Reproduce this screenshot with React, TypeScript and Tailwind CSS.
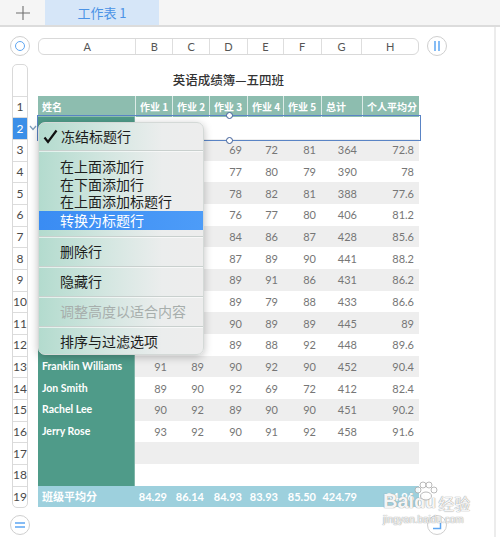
import React from "react";

const COLS = ["w-[97px]", "w-[37px]", "w-[37px]", "w-[38px]", "w-[36px]", "w-[38px]", "w-[41px]", "w-[57px]"];
const LETTERS = ["A", "B", "C", "D", "E", "F", "G", "H"];
const HEADERS = ["姓名", "作业 1", "作业 2", "作业 3", "作业 4", "作业 5", "总计", "个人平均分"];

// row number -> [name, b, c, d, e, f, total, avg]; rows 2-12 name/B/C sit under the menu
const DATA: Record<number, (string | number)[]> = {
  2: ["", "", "", "", "", "", "", ""],
  3: ["", "", "", 69, 72, 81, 364, 72.8],
  4: ["", "", "", 77, 80, 79, 390, 78],
  5: ["", "", "", 78, 82, 81, 388, 77.6],
  6: ["", "", "", 76, 77, 80, 406, 81.2],
  7: ["", "", "", 84, 86, 87, 428, 85.6],
  8: ["", "", "", 87, 89, 90, 441, 88.2],
  9: ["", "", "", 89, 91, 86, 431, 86.2],
  10: ["", "", "", 89, 79, 88, 433, 86.6],
  11: ["", "", "", 90, 89, 89, 445, 89],
  12: ["", "", "", 89, 88, 92, 448, 89.6],
  13: ["Franklin Williams", 91, 89, 90, 92, 90, 452, 90.4],
  14: ["Jon Smith", 89, 90, 92, 69, 72, 412, 82.4],
  15: ["Rachel Lee", 90, 92, 89, 90, 90, 451, 90.2],
  16: ["Jerry Rose", 93, 92, 90, 91, 92, 458, 91.6],
  17: ["", "", "", "", "", "", "", ""],
  18: ["", "", "", "", "", "", "", ""],
};
const FOOTER = ["班级平均分", "84.29", "86.14", "84.93", "83.93", "85.50", "424.79", "84.96"];

const CJK = "font-['Noto_Sans_CJK_SC',sans-serif]";
const NUM = "font-['Lato','Noto_Sans_CJK_SC',sans-serif]";

const MenuSep = () => <div className="h-[2px] border-t border-[#c9d0ce] border-b border-b-white/60" />;

export default function App() {
  const rowNums = Array.from({ length: 19 }, (_, i) => i + 1);

  return (
    <div className={`relative w-[500px] h-[537px] bg-white overflow-hidden ${NUM}`}>
      {/* sheet tabs */}
      <div className="flex h-[27px] bg-[#f5f5f5] border-b-2 border-[#dcdcdc]">
        <div className="w-[45px] flex items-center justify-center">
          <svg width="14" height="14" viewBox="0 0 14 14">
            <path d="M7 0v14M0 7h14" stroke="#6f6f6f" strokeWidth="1.1" />
          </svg>
        </div>
        <div className={`w-[114px] bg-[#d6e6f8] flex items-center justify-center text-[13px] leading-[16px] text-[#4b93e6] ${CJK}`}>
          工作表 1
        </div>
      </div>

      <div className="flex pl-[10px] pt-[9px]">
        {/* left gutter */}
        <div className="w-[20px] flex flex-col items-center">
          <div className="w-[20px] h-[20px] rounded-full border border-[#cfcfcf] flex items-center justify-center">
            <div className="w-[10px] h-[10px] rounded-full border-[1.5px] border-[#5ea6f2]" />
          </div>
          <div className="mt-[8px] w-[16px] border border-[#d9d9d9] rounded-[5px] overflow-hidden">
            <div className="h-[30.7px]" />
            {rowNums.map((n) => (
              <div
                key={n}
                className={`h-[21.67px] border-t border-[#dcdcdc] flex items-center justify-center text-[12px] leading-[14px] ${
                  n === 2 ? "bg-[#3b8fe8] text-white" : "text-[#4a4a4a]"
                }`}
              >
                {n}
              </div>
            ))}
          </div>
          <div className="mt-[7px] w-[20px] h-[20px] rounded-full border border-[#cfcfcf] flex items-center justify-center">
            <svg width="10" height="6" viewBox="0 0 10 6">
              <path d="M0 1h10M0 5h10" stroke="#5ea6f2" strokeWidth="1.5" />
            </svg>
          </div>
        </div>

        {/* table */}
        <div className="ml-[8px] w-[381px] flex flex-col">
          <div className="h-[20px] flex items-center">
            <div className="flex h-[17px] w-full border border-[#d9d9d9] rounded-[6px]">
              {LETTERS.map((l, i) => (
                <div
                  key={l}
                  className={`${COLS[i]} ${i > 0 ? "border-l border-[#dedede]" : ""} flex items-center justify-center text-[11px] leading-[13px] text-[#555]`}
                >
                  {l}
                </div>
              ))}
            </div>
          </div>

          <div className="mt-[8px]">
            <div className={`h-[31.7px] flex items-center justify-center text-[12.5px] leading-[16px] font-medium text-[#333] ${CJK}`}>
              英语成绩簿—五四班
            </div>

            <div className="flex h-[21.67px] bg-[#8dbdaf]">
              {HEADERS.map((h, i) => (
                <div
                  key={h}
                  className={`${COLS[i]} ${i > 0 ? "border-l border-white/70" : ""} flex items-center pl-[4px] text-[10px] leading-[13px] font-bold text-white whitespace-nowrap overflow-hidden ${CJK}`}
                >
                  {h}
                </div>
              ))}
            </div>

            {Object.keys(DATA).map((k) => {
              const r = Number(k);
              const row = DATA[r];
              return (
                <div key={r} className={`flex h-[21.67px] ${r % 2 === 1 ? "bg-[#eeeeee]" : "bg-white"}`}>
                  {row.map((v, i) =>
                    i === 0 ? (
                      <div
                        key={i}
                        className={`${COLS[0]} bg-[#4f9b89] border-r border-[#7fb5a8] flex items-center pl-[4px] text-[10.5px] leading-[13px] font-bold text-white whitespace-nowrap`}
                      >
                        {v}
                      </div>
                    ) : (
                      <div
                        key={i}
                        className={`${COLS[i]} flex items-center justify-end pr-[5px] text-[11px] leading-[13px] text-[#767676]`}
                      >
                        {v}
                      </div>
                    )
                  )}
                </div>
              );
            })}

            <div className="flex h-[21.67px] bg-[#9dd0dd]">
              {FOOTER.map((v, i) => (
                <div
                  key={i}
                  className={`${COLS[i]} flex items-center ${
                    i === 0 ? `pl-[4px] ${CJK}` : "justify-end pr-[5px]"
                  } text-[11px] leading-[13px] font-bold text-white whitespace-nowrap`}
                >
                  {v}
                </div>
              ))}
            </div>
          </div>
        </div>

        {/* right gutter */}
        <div className="ml-[8px] w-[20px] flex flex-col justify-between">
          <div className="w-[20px] h-[20px] rounded-full border border-[#cfcfcf] flex items-center justify-center">
            <svg width="6" height="10" viewBox="0 0 6 10">
              <path d="M1 0v10M5 0v10" stroke="#5ea6f2" strokeWidth="1.5" />
            </svg>
          </div>
          <div className="w-[20px] h-[20px] rounded-full border border-[#cfcfcf] flex items-center justify-center">
            <svg width="10" height="10" viewBox="0 0 10 10">
              <path d="M1 8.5h7.5V1" stroke="#5ea6f2" strokeWidth="1.5" fill="none" />
            </svg>
          </div>
        </div>
      </div>

      {/* right scroll edge */}
      <div className="absolute left-[494px] top-[27px] bottom-0 w-[2px] bg-[#ececec]" />

      {/* row 2 selection */}
      <div className="absolute left-[37px] top-[115px] w-[384px] h-[25.5px] border-[1.5px] border-[#5a84c5]" />
      <div className="absolute left-[225.5px] top-[111.5px] w-[7px] h-[7px] rounded-full bg-white border-[1.5px] border-[#3d5d97]" />
      <div className="absolute left-[225.5px] top-[137px] w-[7px] h-[7px] rounded-full bg-white border-[1.5px] border-[#3d5d97]" />
      <svg className="absolute left-[29px] top-[125px]" width="8" height="6" viewBox="0 0 8 6">
        <path d="M1 1l3 3.5L7 1" stroke="#7d9dbd" strokeWidth="1.2" fill="none" />
      </svg>

      {/* context menu */}
      <div
        className={`absolute left-[38px] top-[122px] w-[166px] h-[233px] rounded-[7px] overflow-hidden shadow-[0_2px_8px_rgba(0,0,0,0.25)] border border-[#d4d9d7] bg-[linear-gradient(90deg,#b3dbce_0%,#d6e7e2_45%,#ebeded_75%,#ededed_100%)] text-[14px] leading-[17px] text-[#1d1d1d] ${CJK}`}
      >
        <div className="h-[27px] flex items-center pl-[4px]">
          <svg width="15" height="15" viewBox="0 0 15 15" className="mr-[3px]">
            <path d="M1.5 8.5l3.5 4.5L13.5 1.5" stroke="#111" strokeWidth="2.2" fill="none" />
          </svg>
          冻结标题行
        </div>
        <MenuSep />
        <div className="pt-[6px] pb-[6px]">
          <div className="h-[17.5px] flex items-center pl-[21px]">在上面添加行</div>
          <div className="h-[17.5px] flex items-center pl-[21px]">在下面添加行</div>
          <div className="h-[17.5px] flex items-center pl-[21px]">在上面添加标题行</div>
          <div className="h-[19px] flex items-center pl-[21px] bg-[linear-gradient(90deg,#3a8cf3,#4d9cf8)] text-white">
            转换为标题行
          </div>
        </div>
        <MenuSep />
        <div className="h-[28px] flex items-center pl-[21px]">删除行</div>
        <MenuSep />
        <div className="h-[28px] flex items-center pl-[21px]">隐藏行</div>
        <MenuSep />
        <div className="h-[28px] flex items-center pl-[21px] text-[#a7aeac]">调整高度以适合内容</div>
        <MenuSep />
        <div className="h-[27px] flex items-center pl-[21px]">排序与过滤选项</div>
      </div>

      {/* watermark */}
      <div className="absolute left-[383px] top-[481px] w-[92px] text-white/90 [text-shadow:0_0_1px_#9a9a9a,0_0_1px_#9a9a9a] pointer-events-none">
        <svg width="26" height="20" viewBox="0 0 26 20" className="absolute left-[30px] top-0">
          <g fill="white" fillOpacity="0.85" stroke="#a8a8a8" strokeWidth="0.8">
            <ellipse cx="13" cy="15" rx="5.5" ry="4" />
            <circle cx="5" cy="9" r="3" />
            <circle cx="10" cy="4" r="3" />
            <circle cx="16" cy="4" r="3" />
            <circle cx="21" cy="9" r="3" />
          </g>
        </svg>
        <div className="flex items-end leading-none pt-[10px]">
          <span className="text-[20px] font-bold font-['Liberation_Sans',sans-serif]">Bai</span>
          <span className="text-[18px] font-bold font-['Liberation_Sans',sans-serif]">du</span>
          <span className={`ml-[2px] text-[16px] ${CJK}`}>经验</span>
        </div>
        <div className="text-[10px] leading-none font-['Liberation_Sans',sans-serif] mt-[4px]">jingyan.baidu.com</div>
      </div>
    </div>
  );
}
